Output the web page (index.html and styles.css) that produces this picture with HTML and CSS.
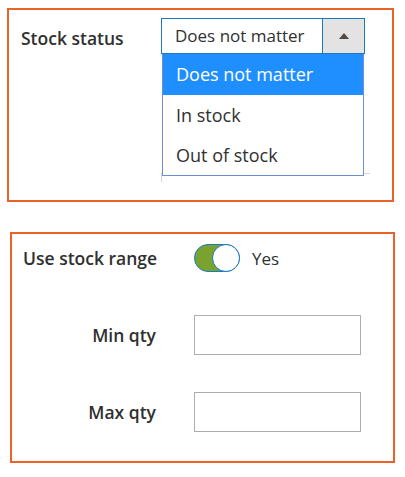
FILE: index.html
```html
<!DOCTYPE html>
<html lang="en">
<head>
    <meta charset="UTF-8">
    <meta name="viewport" content="width=device-width, initial-scale=1.0">
    <title>Stock filter</title>
    <link rel="stylesheet" href="styles.css">
</head>
<body>

    <!-- Stock status with the dropdown opened -->
    <fieldset class="panel panel-status">
        <div class="field">
            <label class="field-label">Stock status</label>
            <div class="field-control">
                <div class="select open">
                    <span class="select-value">Does not matter</span>
                    <span class="select-button"><span class="arrow"></span></span>
                </div>
                <ul class="select-list">
                    <li class="selected">Does not matter</li>
                    <li>In stock</li>
                    <li>Out of stock</li>
                </ul>
                <span class="ghost-line"></span>
            </div>
        </div>
    </fieldset>

    <!-- Stock range -->
    <fieldset class="panel panel-range">
        <div class="field field-switch">
            <label class="field-label">Use stock range</label>
            <div class="field-control">
                <span class="switch on"><span class="knob"></span></span>
                <span class="switch-text">Yes</span>
            </div>
        </div>
        <div class="field field-qty">
            <label class="field-label">Min qty</label>
            <div class="field-control">
                <input type="text" class="input-text">
            </div>
        </div>
        <div class="field field-qty">
            <label class="field-label">Max qty</label>
            <div class="field-control">
                <input type="text" class="input-text">
            </div>
        </div>
    </fieldset>

</body>
</html>
```

FILE: styles.css
```css
/* General Styles */
body {
    font-family: 'Open Sans', 'Noto Sans', sans-serif;
    margin: 0;
    padding: 8px 0 0 0;
    background: #fff;
    color: #303030;
}

.panel {
    border: 2px solid #eb6126;
    margin: 0;
    box-sizing: border-box;
    min-width: 0;
}

.field {
    display: flex;
}

.field-label {
    font-size: 17.5px;
    font-weight: 600;
    color: #303030;
}

/* Stock status */
.panel-status {
    margin-left: 7px;
    width: 387px;
    height: 194px;
    padding: 8px 0 0 12px;
}

.panel-status .field-label {
    width: 140px;
    padding-top: 9px;
    line-height: 22px;
}

.panel-status .field-control {
    position: relative;
    width: 204px;
}

.select {
    display: flex;
    height: 36px;
    border: 1px solid #1979c3;
    box-sizing: border-box;
    background: #fff;
}

.select-value {
    flex: 1;
    padding-left: 13px;
    font-size: 17px;
    line-height: 34px;
    color: #303030;
}

.select-button {
    width: 41px;
    background: #e3e3e3;
    border-left: 1px solid #1979c3;
    display: flex;
    align-items: center;
    justify-content: center;
}

.arrow {
    width: 0;
    height: 0;
    border-left: 5px solid transparent;
    border-right: 5px solid transparent;
    border-bottom: 6px solid #514943;
}

.select-list {
    list-style: none;
    margin: 0 1px;
    padding: 0;
    border: 1px solid #6b8fcf;
    border-top: 0;
    position: relative;
    z-index: 1;
    background: #fff;
}

.select-list li {
    height: 40px;
    line-height: 40px;
    padding-left: 13px;
    font-size: 18px;
    color: #303030;
}

.select-list li.selected {
    height: 41px;
    line-height: 41px;
    background: #1f8fff;
    color: #fff;
}

/* faint edge of the field behind the open list */
.ghost-line {
    position: absolute;
    left: 0;
    top: 155px;
    width: 209px;
    height: 9px;
    border-left: 1px solid #d6d6d6;
    border-top: 1px solid #d6d6d6;
    box-sizing: border-box;
}

/* Stock range */
.panel-range {
    margin: 30px 0 0 10px;
    width: 385px;
    height: 231px;
    padding: 10px 0 0 11px;
}

.panel-range .field-label {
    width: 133px;
    text-align: right;
    margin-right: 38px;
    white-space: nowrap;
}

.field-switch {
    align-items: center;
    height: 28px;
}

.field-switch .field-control {
    display: flex;
    align-items: center;
}

.switch {
    position: relative;
    width: 46px;
    height: 28px;
    box-sizing: border-box;
    border: 1px solid #1979c3;
    border-radius: 14px;
    background: #79a22e;
}

.knob {
    position: absolute;
    right: -1px;
    top: -1px;
    width: 28px;
    height: 28px;
    box-sizing: border-box;
    border: 1px solid #1979c3;
    border-radius: 50%;
    background: #fff;
}

.switch-text {
    margin-left: 12px;
    font-size: 17px;
    color: #303030;
}

.field-qty {
    align-items: center;
    height: 40px;
    margin-top: 43px;
}

.field-qty + .field-qty {
    margin-top: 37px;
}

.input-text {
    display: block;
    width: 167px;
    height: 40px;
    box-sizing: border-box;
    border: 1px solid #adadad;
    margin: 0;
    padding: 0 10px;
    font-family: inherit;
}
```
